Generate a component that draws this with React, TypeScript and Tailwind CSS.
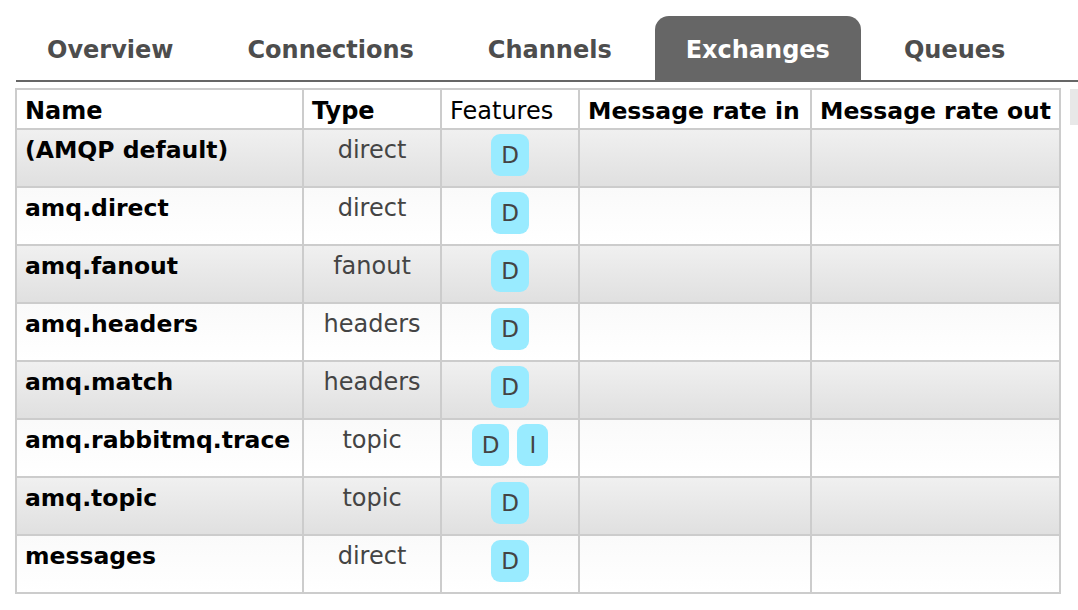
import React from "react";

interface Exchange {
  name: string;
  type: string;
  features: string[];
}

const exchanges: Exchange[] = [
  { name: "(AMQP default)", type: "direct", features: ["D"] },
  { name: "amq.direct", type: "direct", features: ["D"] },
  { name: "amq.fanout", type: "fanout", features: ["D"] },
  { name: "amq.headers", type: "headers", features: ["D"] },
  { name: "amq.match", type: "headers", features: ["D"] },
  { name: "amq.rabbitmq.trace", type: "topic", features: ["D", "I"] },
  { name: "amq.topic", type: "topic", features: ["D"] },
  { name: "messages", type: "direct", features: ["D"] },
];

const tabs = ["Overview", "Connections", "Channels", "Exchanges", "Queues"];

const Tabs = () => (
  <div className="ml-[16px] mt-[16px] flex items-end gap-[12px] border-b-2 border-[#666]">
    {tabs.map((tab) => {
      const active = tab === "Exchanges";
      return (
        <div
          key={tab}
          className={
            active
              ? "h-[64px] px-[31px] flex items-center rounded-t-[14px] bg-[#666] text-white font-bold text-[24px]"
              : "h-[64px] px-[31px] flex items-center text-[#4d4d4d] font-bold text-[24px]"
          }
        >
          <span className="pt-[3px]">{tab}</span>
        </div>
      );
    })}
  </div>
);

const Badge = ({ label }: { label: string }) => (
  <span className="h-[42px] min-w-[31px] px-[10px] flex items-center justify-center rounded-[9px] bg-[#99ebff] text-[#444] text-[23px]">
    {label}
  </span>
);

export default function App() {
  return (
    <div
      className="w-[1078px] h-[610px] overflow-hidden bg-white text-black"
      style={{ fontFamily: '"DejaVu Sans", Verdana, sans-serif' }}
    >
      <Tabs />

      <div className="mt-[6px] ml-[15px] flex items-start gap-[9px]">
        {/* table */}
        <div className="grid grid-cols-[285px_136px_136px_230px_247px] gap-[2px] p-[2px] bg-[#ccc] shrink-0 text-[24px] leading-[26px]">
          <div className="bg-white h-[38px] px-[8px] pt-[8px] font-bold whitespace-nowrap">Name</div>
          <div className="bg-white h-[38px] px-[8px] pt-[8px] font-bold whitespace-nowrap">Type</div>
          <div className="bg-white h-[38px] px-[8px] pt-[8px] whitespace-nowrap">Features</div>
          <div className="bg-white h-[38px] px-[8px] pt-[8px] font-bold whitespace-nowrap text-[23.5px]">Message rate in</div>
          <div className="bg-white h-[38px] px-[8px] pt-[8px] font-bold whitespace-nowrap text-[23.5px]">Message rate out</div>

          {exchanges.map((ex, i) => {
            const rowBg =
              i % 2 === 0
                ? "bg-gradient-to-b from-[#f0f0f0] to-[#e0e0e0]"
                : "bg-gradient-to-b from-[#fafafa] to-[#ffffff]";
            return (
              <React.Fragment key={ex.name}>
                <div className={`${rowBg} h-[56px] px-[8px] pt-[7px] font-bold whitespace-nowrap text-[23.5px]`}>{ex.name}</div>
                <div className={`${rowBg} h-[56px] px-[8px] pt-[7px] text-center text-[#444]`}>{ex.type}</div>
                <div className={`${rowBg} h-[56px] pt-[4px] flex justify-center items-start gap-[8px]`}>
                  {ex.features.map((f) => (
                    <Badge key={f} label={f} />
                  ))}
                </div>
                <div className={`${rowBg} h-[56px]`} />
                <div className={`${rowBg} h-[56px]`} />
              </React.Fragment>
            );
          })}
        </div>

        {/* column options toggle, cut off at the edge */}
        <div className="mt-[1px] w-[20px] h-[36px] shrink-0 bg-[#e8e8e8]" />
      </div>
    </div>
  );
}
